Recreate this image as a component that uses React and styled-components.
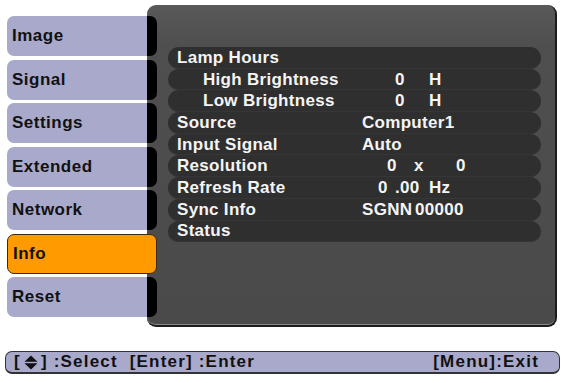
import React from 'react';
import styled, { createGlobalStyle } from 'styled-components';

const GlobalStyle = createGlobalStyle`
  html, body {
    margin: 0;
    padding: 0;
    background: #ffffff;
  }
  body {
    font-family: "Liberation Sans", Arial, sans-serif;
  }
`;

const LAVENDER = '#a9a9cc';

const menuItems = ['Image', 'Signal', 'Settings', 'Extended', 'Network', 'Info', 'Reset'];

const infoRows = [
  { label: 'Lamp Hours' },
  { label: 'High Brightness', indent: true, parts: [[33, '0'], [67, 'H']] },
  { label: 'Low Brightness', indent: true, parts: [[33, '0'], [67, 'H']] },
  { label: 'Source', parts: [[0, 'Computer1']] },
  { label: 'Input Signal', parts: [[0, 'Auto']] },
  { label: 'Resolution', parts: [[25, '0'], [52, 'x'], [94, '0']] },
  { label: 'Refresh Rate', parts: [[16, '0'], [33, '.00'], [67, 'Hz']] },
  { label: 'Sync Info', parts: [[0, 'SGNN'], [53, '00000']] },
  { label: 'Status' },
];

const Screen = styled.div`
  width: 567px;
  height: 383px;
  display: flex;
  flex-direction: column;
  overflow: hidden;
`;

const Main = styled.div`
  display: flex;
  padding: 5px 0 0 7px;
`;

const Menu = styled.div`
  position: relative;
  z-index: 2;
  width: 150px;
  padding-top: 11px;
  display: flex;
  flex-direction: column;
  gap: 3.5px;
`;

const Tab = styled.div`
  height: 40px;
  box-sizing: border-box;
  display: flex;
  align-items: center;
  padding-left: 5px;
  font-size: 17px;
  font-weight: bold;
  letter-spacing: 0.5px;
  color: #111;
  border-radius: 7px;
  background: ${({ $active }) =>
    $active
      ? '#ff9a00'
      : `linear-gradient(to right, ${LAVENDER} 0, ${LAVENDER} 140px, #000 140px)`};
  border: ${({ $active }) => ($active ? '1px solid #3a2a10' : 'none')};
`;

const Panel = styled.div`
  position: relative;
  z-index: 1;
  margin-left: -10px;
  width: 410px;
  height: 322px;
  box-sizing: border-box;
  padding: 42px 14px 0 21px;
  border-radius: 9px;
  background: linear-gradient(to bottom, #595959 0, #4f4f4f 40px, #4a4a4a 100%);
  border-right: 2px solid #1c1c1c;
  border-bottom: 2px solid #1c1c1c;
  box-shadow: inset 0 -1px 0 #8a8a8a;
`;

const Rows = styled.div`
  display: flex;
  flex-direction: column;
`;

const Row = styled.div`
  height: 21.7px;
  display: flex;
  align-items: center;
  padding-left: 9px;
  border-radius: 11px;
  background: #2f2f2f;
  box-shadow: inset 0 -1px 0 #363636;
  color: #f4f4f4;
  font-size: 17px;
  font-weight: bold;
  letter-spacing: 0.3px;
  white-space: nowrap;
`;

const Label = styled.div`
  width: 185px;
  box-sizing: border-box;
  padding-left: ${({ $indent }) => ($indent ? '26px' : '0')};
`;

const Value = styled.div`
  display: flex;
`;

const Part = styled.span`
  display: inline-block;
  width: ${({ $w }) => ($w == null ? 'auto' : `${$w}px`)};
`;

const Footer = styled.div`
  margin: 24px 0 0 5px;
  width: 555px;
  height: 23px;
  box-sizing: border-box;
  display: flex;
  align-items: center;
  justify-content: space-between;
  padding: 0 20px 0 8px;
  background: ${LAVENDER};
  border: 1px solid #333;
  border-bottom-width: 2px;
  border-radius: 7px;
  font-size: 17px;
  font-weight: bold;
  color: #111;
  letter-spacing: 1.2px;
  white-space: pre;
`;

const Hints = styled.div`
  display: flex;
  align-items: center;
`;

const Arrows = () => (
  <svg width="14" height="15" viewBox="0 0 14 15" style={{ margin: '0 3px' }}>
    <path d="M7 0.5 L13.5 6.8 L0.5 6.8 Z" fill="#111" />
    <path d="M7 14.5 L13.5 8.2 L0.5 8.2 Z" fill="#111" />
  </svg>
);

function renderValue(parts) {
  if (!parts) return null;
  return (
    <Value>
      {parts.map(([at, text], i) => {
        const next = parts[i + 1];
        const w = next ? next[0] - at : null;
        return (
          <React.Fragment key={i}>
            {i === 0 && at > 0 && <Part $w={at} />}
            <Part $w={w}>{text}</Part>
          </React.Fragment>
        );
      })}
    </Value>
  );
}

export default function App() {
  return (
    <Screen>
      <GlobalStyle />
      <Main>
        <Menu>
          {menuItems.map((item) => (
            <Tab key={item} $active={item === 'Info'}>
              {item}
            </Tab>
          ))}
        </Menu>
        <Panel>
          <Rows>
            {infoRows.map((row) => (
              <Row key={row.label}>
                <Label $indent={row.indent}>{row.label}</Label>
                {renderValue(row.parts)}
              </Row>
            ))}
          </Rows>
        </Panel>
      </Main>
      <Footer>
        <Hints>
          [<Arrows />] :Select  [Enter] :Enter
        </Hints>
        <span>[Menu]:Exit</span>
      </Footer>
    </Screen>
  );
}
